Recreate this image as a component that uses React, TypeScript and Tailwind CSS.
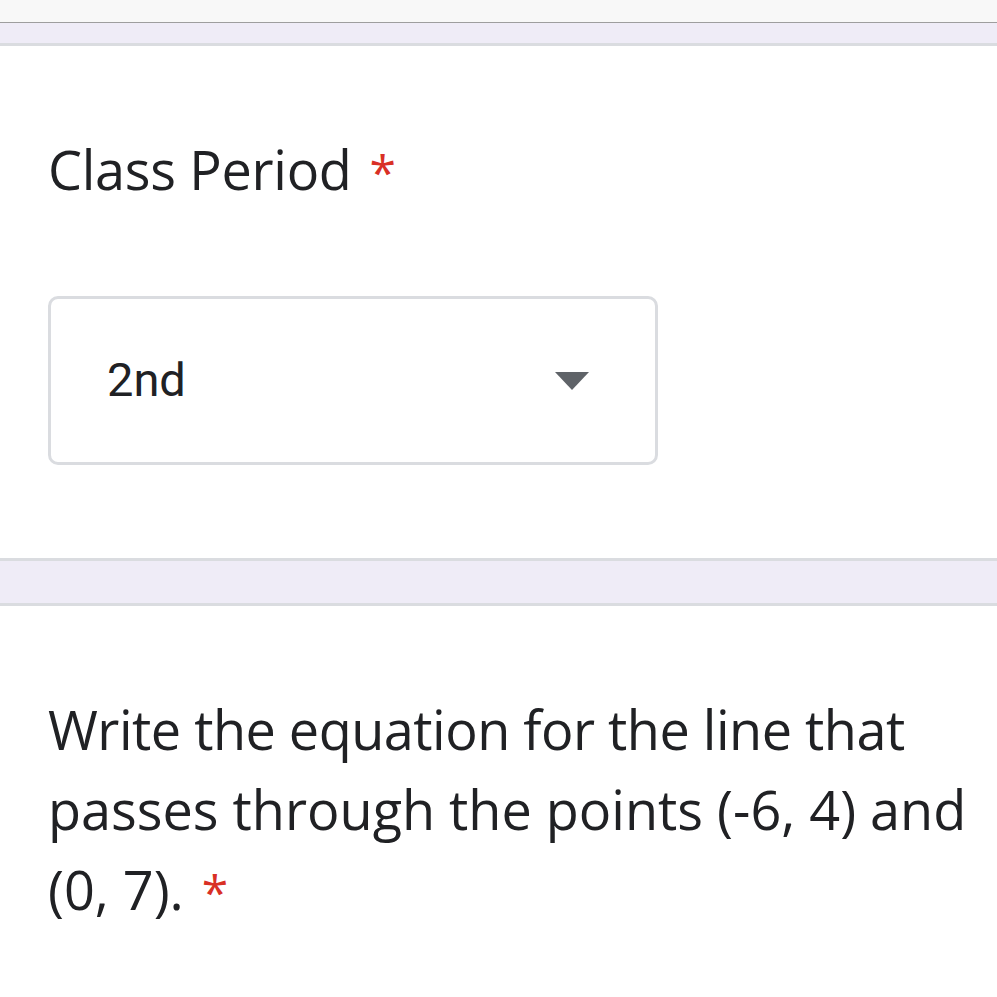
import React from "react";

// Thin lavender strip between form cards.
const Divider = ({ height }: { height: string }) => (
  <div className={`border-y-[3px] border-[#dadce0] bg-[#efecf7] ${height}`} />
);

const Required = () => (
  <span className="ml-[18px] text-[48px] text-[#d93025]">*</span>
);

export default function App() {
  return (
    <div
      className="flex h-[997px] w-[997px] flex-col overflow-hidden bg-white text-[#202124]"
      style={{ fontFamily: '"Open Sans", "Noto Sans", sans-serif' }}
    >
      {/* Top of previous card */}
      <div className="h-[23px] border-b border-[#9e9e9e] bg-[#f8f8f8]" />
      <div className="h-[23px] border-b-[3px] border-[#dadce0] bg-[#efecf7]" />

      {/* Class period question */}
      <div className="flex h-[512px] flex-col px-[48px]">
        <div className="mt-[91px] text-[54px] leading-[64px] tracking-[-0.3px]">
          Class Period
          <Required />
        </div>
        <div className="mt-[92px] flex h-[169px] w-[610px] items-center justify-between rounded-[10px] border-[3px] border-[#dadce0] pl-[56px] pr-[66px]">
          <span
            className="text-[47px] text-[#202124]"
            style={{ fontFamily: "Roboto, sans-serif" }}
          >
            2nd
          </span>
          <svg width="34" height="18" viewBox="0 0 34 18">
            <path d="M0 0 L34 0 L17 18 Z" fill="#5f6368" />
          </svg>
        </div>
      </div>

      <Divider height="h-[48px]" />

      {/* Equation question, wrapped as in the form */}
      <div className="flex flex-col px-[48px] pt-[83px] text-[54px] leading-[80px] whitespace-nowrap">
        <div className="tracking-[-0.5px]">
          Write the equation for the line that
        </div>
        <div>passes through the points (-6, 4) and</div>
        <div>
          (0, 7).
          <Required />
        </div>
      </div>
    </div>
  );
}
